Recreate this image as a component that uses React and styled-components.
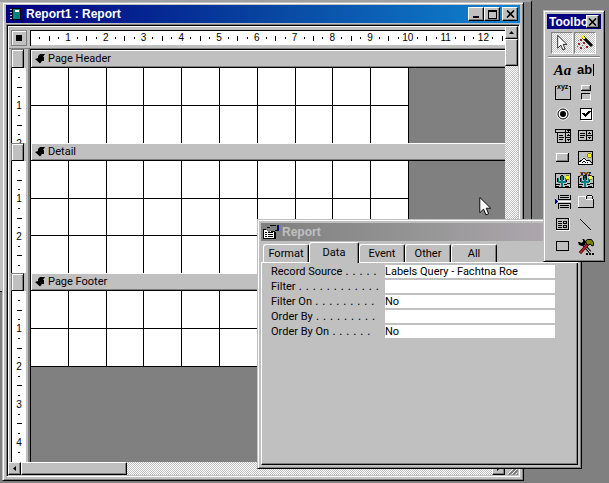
import React from "react";
import styled, { createGlobalStyle, css } from "styled-components";

const FACE = "#c0c0c0";
const SHADE = "#808080";
const UI = '"Liberation Sans", Arial, sans-serif';
const FORM = 'Roboto, Tahoma, sans-serif';

const GlobalStyle = createGlobalStyle`
  * { box-sizing: border-box; }
  html, body, #root { height: 100%; }
  body { margin: 0; background: ${SHADE}; overflow: hidden; }
  button, input { margin: 0; padding: 0; border: 0; border-radius: 0; color: #000; font: inherit; }
  svg { display: block; flex: none; }
`;

const raised = css`
  background: ${FACE};
  border: 1px solid;
  border-color: #fff #000 #000 #fff;
  box-shadow: inset -1px -1px ${SHADE};
`;
const dither = css`
  background: repeating-conic-gradient(#fff 0 25%, ${FACE} 0 50%) 0 0 / 2px 2px;
`;

const Desktop = styled.main`
  position: relative;
  width: 100%;
  height: 100%;
  min-height: 300px;
  overflow: hidden;
  background: ${SHADE};
  color: #000;
  font: 12px/14px ${UI};
`;

const BackWindow = styled.div`
  position: absolute;
  inset: 0 77px auto 0;
  height: 292px;
  background: linear-gradient(to right, ${FACE} 4px, ${SHADE} 4px);
  border-top: 2px solid #a0a0a0;
  border-right: 1px solid #000;
  border-bottom: 1px solid #000;
`;

const Frame = styled.section`
  position: absolute;
  display: flex;
  flex-direction: column;
  padding: 2px 3px 3px;
  background: ${FACE};
  border: 1px solid;
  border-color: ${FACE} #000 #000 ${FACE};
  box-shadow: inset 1px 1px #fff, inset -1px -1px ${SHADE};
`;
const ReportFrame = styled(Frame)`
  inset: 2px 85px 2px 2px;
`;
const PropertyFrame = styled(Frame)`
  inset: 219px 27px 14px 257px;
  padding-top: 3px;
`;
const ToolFrame = styled(Frame)`
  top: 10px;
  right: 4px;
  width: 62px;
  padding: 3px;
`;

const TitleBar = styled.header`
  display: flex;
  align-items: center;
  flex: none;
  height: 18px;
  padding: 0 2px 0 4px;
  gap: 5px;
  color: #fff;
  background: linear-gradient(to right, #000080, #0844a0 50%, #1084d0);
`;
const GrayTitleBar = styled(TitleBar)`
  padding-left: 2px;
  gap: 2px;
  color: ${FACE};
  background: linear-gradient(to right, #808080, #959595 50%, #b4acb4);
`;
const ToolTitleBar = styled(TitleBar)`
  height: 15px;
  padding: 0 2px;
  gap: 0;
  background: #000080;
`;
const Title = styled.h1`
  flex: 1;
  min-width: 0;
  margin: 0;
  overflow: hidden;
  white-space: nowrap;
  font: bold 12px/16px ${UI};
`;
const Caption = styled.div`
  display: flex;
`;
const CaptionButton = styled.button`
  ${raised}
  display: grid;
  place-items: center;
  width: ${(p) => (p.$small ? 13 : 16)}px;
  height: ${(p) => (p.$small ? 13 : 14)}px;
  margin-left: ${(p) => (p.$apart ? 2 : 0)}px;
`;

const Client = styled.div`
  flex: 1;
  min-height: 0;
  display: grid;
  grid-template: minmax(0, 1fr) 13px / minmax(0, 1fr) 13px;
  margin-top: 1px;
  border: 1px solid;
  border-color: ${SHADE} #fff #fff ${SHADE};
  box-shadow: inset 1px 1px #000;
  padding: 1px;
`;
const Design = styled.div`
  display: flex;
  flex-direction: column;
  min-height: 0;
  overflow: hidden;
  border-left: 1px solid #fff;
`;
const RulerRow = styled.div`
  display: grid;
  grid-template-columns: 21px minmax(0, 1fr);
  flex: none;
  height: 23px;
  padding-top: 3px;
  border-top: 1px solid #fff;
  box-shadow: inset 0 -1px ${SHADE};
`;
const SelectorCell = styled.button`
  display: grid;
  place-items: center;
  width: 16px;
  height: 16px;
  margin-left: 2px;
  background: ${FACE};
  border: 1px solid ${SHADE};
  box-shadow: inset 1px 1px #fff;
`;
const Ruler = styled.div`
  height: 16px;
  overflow: hidden;
  background: #fff;
  border: solid #000;
  border-width: 1px 0 0 1px;
  box-shadow: inset 0 -1px ${FACE};
`;
const Scale = styled.div`
  display: grid;
  grid-template-columns: repeat(50, 1fr);
  align-items: center;
  justify-items: center;
  width: 472px;
  height: 14px;
  margin-left: 4px;
`;
const Mark = styled.span`
  display: flex;
  justify-content: center;
  align-items: center;
  width: 2px;
  height: 10px;
  font: 10px/10px ${UI};
  &::before {
    content: "";
    flex: none;
    display: ${(p) => (p.$kind === "number" ? "none" : "block")};
    width: ${(p) => (p.$upright ? 1 : p.$kind === "tick" ? 5 : 2)}px;
    height: ${(p) => (p.$upright ? (p.$kind === "tick" ? 5 : 2) : 1)}px;
    background: #000;
  }
`;

const SectionBox = styled.div`
  display: flex;
  flex-direction: column;
  flex: ${(p) => (p.$fill ? "1 0 0" : "none")};
  min-height: 0;
`;
const BarRow = styled.div`
  display: grid;
  grid-template-columns: 21px minmax(0, 1fr);
  flex: none;
  height: ${(p) => (p.$first ? 19 : 18)}px;
`;
const BarGutter = styled.div`
  padding: 0 4px 0 2px;
  border-right: 2px solid ${SHADE};
`;
const SectionSelector = styled.button`
  ${raised}
  display: block;
  width: 100%;
  height: 100%;
  border-color: ${SHADE} #000 #000 ${SHADE};
  box-shadow: inset 1px 1px #fff, inset -1px 0 ${SHADE};
`;
const SectionBar = styled.div`
  display: flex;
  align-items: center;
  gap: 3px;
  padding-left: 4px;
  border: solid #000;
  border-width: ${(p) => (p.$first ? 1 : 0)}px 0 1px 1px;
  box-shadow: inset 1px 1px #fff, inset 0 -1px ${SHADE};
  font: 11px/16px ${FORM};
`;
const BodyRow = styled.div`
  display: grid;
  grid-template-columns: 21px minmax(0, 1fr);
  flex: ${(p) => (p.$height ? "none" : "1 0 0")};
  height: ${(p) => (p.$height ? p.$height + "px" : "auto")};
  min-height: 0;
  overflow: hidden;
`;
const Gutter = styled.div`
  padding: 0 2px;
  overflow: hidden;
  border-right: 2px solid ${SHADE};
`;
const VerticalRuler = styled.div`
  width: 15px;
  height: 100%;
  overflow: hidden;
  padding-top: 5px;
  background: #fff;
  border-left: 1px solid #000;
`;
const VerticalScale = styled.div`
  display: grid;
  grid-auto-rows: minmax(0, 1fr);
  place-items: center;
  height: ${(p) => p.$length}px;
`;
const Paper = styled.div`
  overflow: hidden;
  background: ${SHADE};
  border-left: 1px solid #000;
`;
const Sheet = styled.div`
  display: grid;
  grid-template-columns: repeat(10, 1fr);
  grid-auto-rows: 1fr;
  width: 378px;
  height: ${(p) => p.$length}px;
  background: #fff;
`;
const Cell = styled.i`
  border: solid #000;
  border-width: 0 1px 1px 0;
`;

const VScroll = styled.div`
  ${dither}
  display: flex;
  flex-direction: column;
`;
const HScroll = styled.div`
  ${dither}
  display: flex;
`;
const ScrollButton = styled.button`
  ${raised}
  display: grid;
  place-items: center;
  width: 13px;
  height: 13px;
`;
const Thumb = styled.div`
  ${raised}
  width: ${(p) => (p.$across ? 106 : 13)}px;
  height: ${(p) => (p.$across ? 13 : 27)}px;
  margin-right: auto;
`;
const Grip = styled.div`
  background: ${FACE};
`;

const PropertyBody = styled.div`
  flex: 1;
  display: flex;
  flex-direction: column;
  padding-top: 1px;
  font: 11px/14px ${FORM};
`;
const Tabs = styled.div`
  display: flex;
  align-items: flex-end;
  height: 21px;
  padding-left: 2px;
  background: linear-gradient(#fff, #fff) 0 100% / 100% 1px no-repeat;
`;
const Tab = styled.button`
  width: ${(p) => (p.$active ? 50 : 46)}px;
  height: ${(p) => (p.$active ? 21 : 18)}px;
  margin-bottom: ${(p) => (p.$active ? 0 : 1)}px;
  background: ${FACE};
  border: solid;
  border-width: 1px 1px 0 1px;
  border-color: #fff #000 #000 #fff;
  border-radius: 3px 2px 0 0;
  box-shadow: inset -1px 0 ${SHADE};
`;
const Panel = styled.div`
  flex: 1;
  display: flex;
  flex-direction: column;
  gap: 2px;
  padding: 2px 22px 0 9px;
  border: solid;
  border-width: 0 1px 1px 1px;
  border-color: #fff #000 #000 #fff;
  box-shadow: inset -1px -1px ${SHADE};
`;
const Field = styled.div`
  display: grid;
  grid-template-columns: 114px minmax(0, 1fr);
  height: 13px;
  line-height: 13px;
`;
const FieldLabel = styled.label`
  display: flex;
  gap: 3px;
  white-space: nowrap;
`;
const Leader = styled.span`
  font: 11px/13px "DejaVu Sans", sans-serif;
`;
const FieldInput = styled.input`
  min-width: 0;
  width: 100%;
  height: 13px;
  background: #fff;
  outline: 0;
`;

const Modes = styled.div`
  display: grid;
  grid-template-columns: 22px 22px;
  gap: 1px;
  padding: 3px 0 2px 4px;
`;
const ModeButton = styled.button`
  ${dither}
  display: grid;
  place-items: center;
  height: 22px;
  border: 1px solid;
  border-color: ${SHADE} #fff #fff ${SHADE};
`;
const Rule = styled.hr`
  width: 52px;
  margin: 0 0 1px 1px;
  border: solid;
  border-width: 1px 0;
  border-color: ${SHADE} transparent #fff;
`;
const Palette = styled.div`
  display: grid;
  grid-template-columns: 23px 23px;
  grid-auto-rows: 22px;
  padding: 0 0 1px 4px;
`;
const Tool = styled.button`
  display: grid;
  place-items: center;
  background: transparent;
  white-space: nowrap;
`;
const LabelGlyph = styled.span`
  font: italic bold 15px/16px "Liberation Serif", serif;
`;
const TextGlyph = styled.span`
  padding-right: 1px;
  border-right: 1px solid #000;
  font: bold 13px/12px ${UI};
`;

const Pointer = styled.div`
  position: absolute;
  left: 479px;
  top: 197px;
  pointer-events: none;
`;

const Arrow = ({ size = 19 }) => (
  <svg width={size === 19 ? 13 : 11} height={size} viewBox="0 0 13 20" aria-hidden="true">
    <path d="M.5.5V16.5L4.5 12.8 7 18.8 9.8 17.6 7.3 11.8H12z" fill="#fff" stroke="#000" />
  </svg>
);

const Pic = ({ children, box = 20 }) => (
  <svg width={box} height={box} viewBox={`0 0 ${box} ${box}`} fill="none" stroke="#000" shapeRendering="crispEdges" aria-hidden="true">
    {children}
  </svg>
);

const Cross = () => (
  <svg width="9" height="8" viewBox="0 0 9 8" aria-hidden="true">
    <path d="M1 .5l7 7M8 .5l-7 7" stroke="#000" strokeWidth="1.6" />
  </svg>
);

const Cactus = ({ top }) => (
  <>
    <path d={top ? "M4 6.500H2.500v11h15v-11H16" : "M2.500 3.500h15v14h-15z"} />
    <path stroke="none" fill="#008080" d="M8 6h2v11H8zM5 8h1v3h2v2H5zM12 8h1v5h-3v-2h2z" />
    <path d="M7.500 6v4M10.500 6v4M4.500 8v4M3 14.500h4M11 14.500h3M14 13.500h3M3 16.500h3M12 16.500h4M8 5.500h2M13.500 9v3" />
    <path stroke="none" fill="#ff0" d="M13 6h3v3h-3z" />
    <path stroke="#808000" d="M13 5.500h3M13 9.500h3" />
  </>
);

const tools = [
  ["Label", <LabelGlyph>Aa</LabelGlyph>],
  ["Text Box", <TextGlyph>ab</TextGlyph>],
  ["Option Group", <Pic>
    <path d="M4 4.500H2.500v13h15v-13H16" />
    <text x="4" y="7" stroke="none" fill="#000" fontFamily="Liberation Sans" fontWeight="bold" fontSize="7">xyz</text>
  </Pic>],
  ["Toggle Button", <Pic>
    <path d="M5.500 8V3.500H14" stroke="#fff" /><path d="M5 8.500h9.500V3" /><path d="M6 7.500h7.500V4" stroke={SHADE} />
    <path d="M5.500 17v-5.500H14" /><path d="M6 17.500h8.500V12" stroke="#fff" />
  </Pic>],
  ["Option Button", <svg width="20" height="20" viewBox="0 0 20 20" aria-hidden="true">
    <circle cx="10" cy="10" r="6" fill="none" stroke="#fff" /><circle cx="10" cy="10" r="5" fill="#fff" stroke="#000" /><circle cx="10" cy="10" r="3" />
  </svg>],
  ["Check Box", <Pic>
    <path d="M4.500 4.500h11v11h-11z" fill="#fff" /><path d="M16.500 5v11.500H5" stroke="#fff" />
    <path d="M7 9l2.500 3L14 7" strokeWidth="2" />
  </Pic>],
  ["Combo Box", <Pic>
    <path d="M2.500 3.500h15v3h-15zM4.500 7v9.500h13V7M12.500 4v12M6 9.500h4M6 11.500h5M6 13.500h4M13 11.500h4" />
    <path stroke="none" fill="#000" d="M14 4h3v1h-1v1h-1V5h-1zM15 8h1v1h-1zM14 9h3v1h-3zM14 13h3v1h-3zM15 14h1v1h-1z" />
  </Pic>],
  ["List Box", <Pic>
    <path d="M2.500 4.500h14v10h-14zM10.500 5v9M4 7.500h5M4 9.500h5M4 11.500h4M11 9.500h5" />
    <path stroke="none" fill="#000" d="M13 6h1v1h-1zM12 7h3v1h-3zM12 11h3v1h-3zM13 12h1v1h-1z" />
  </Pic>],
  ["Command Button", <Pic>
    <path d="M3.500 12V5.500H15" stroke="#fff" /><path d="M3 13.500h12.500V5" /><path d="M4 12.500h10.500V6" stroke={SHADE} />
  </Pic>],
  ["Image", <Pic>
    <path d="M2.500 3.500h14v13h-14z" />
    <path d="M3 16v-2l4-3h2l3 2 4 3z" fill="#fff" stroke="none" />
    <path d="M3 14l3-2 2-2 3 3 2-1 3 3M6 15l2-2 2 2M11 15l1-1" />
    <path stroke="none" fill="#ff0" d="M12 6h3v3h-3z" />
    <path stroke="#808000" d="M12 5.500h3M12 9.500h3M11.500 6v3M15.500 6v3" />
  </Pic>],
  ["Unbound Object Frame", <Pic><Cactus /></Pic>],
  ["Bound Object Frame", <Pic>
    <Cactus top />
    <text x="4" y="6" stroke="none" fill="#000" fontFamily="Liberation Sans" fontWeight="bold" fontSize="7">xyz</text>
  </Pic>],
  ["Page Break", <Pic>
    <path d="M5.500 3v4.500h12V3M5.500 17v-5.500h12V17M7 3.500h9M7 5.500h9M7 13.500h9M7 15.500h9" />
    <path d="M5 9.500h13" stroke="#fff" /><path d="M2 7l3 2.500L2 12z" fill="#000080" stroke="none" />
  </Pic>],
  ["Tab Control", <Pic>
    <path d="M2.500 16V4.500H9.500V7M10 7.500h7M12 4.500h4" stroke="#fff" /><path d="M10.500 4v3M11 3.500h5M16.500 4v3M2 15.500h15.500V7" />
  </Pic>],
  ["Subform", <Pic>
    <path d="M3.500 4.500h12v11h-12z" /><path d="M16.500 4v12.500H3" stroke="#fff" />
    <path d="M5 7.500h4M5 9.500h4M5 11.500h4M5 13.500h4M10.500 7.500h3v2h-3zM10.500 11.500h3v2h-3z" />
  </Pic>],
  ["Line", <Pic><path d="M4 5l11 11" /></Pic>],
  ["Rectangle", <Pic><path d="M3.500 5.500h12v9h-12z" /></Pic>],
  ["More Controls", <svg width="20" height="20" viewBox="0 0 20 20" aria-hidden="true">
    <path d="M6 7l8 9" stroke="#000" strokeWidth="3" /><path d="M6 7l8 9" stroke="#fff" />
    <path d="M2 6h2l1 1 2-1V4L6 3h2l2 3-1 3-3 1-3-1z" />
    <path d="M12 8l-8 9" stroke="#000" strokeWidth="3" /><path d="M12 8l-8 9" stroke="#c01818" strokeWidth="2" />
    <path d="M9.500 5l2-1.500h4l2 3v3l-1.500.5-1.500-2-2 1-2-1z" fill="#808000" stroke="#000" />
    <path d="M10 17h2v2h-2zM13 17h2v2h-2zM16 17h2v2h-2z" />
  </svg>],
];

const fields = [
  ["Record Source", ". . . . .", "Labels Query - Fachtna Roe"],
  ["Filter", ". . . . . . . . . . . .", ""],
  ["Filter On", ". . . . . . . . .", "No"],
  ["Order By", ". . . . . . . . .", ""],
  ["Order By On", ". . . . . .", "No"],
];

const sections = [
  { name: "Page Header", marks: 8, scale: 76, height: 75, sheet: 76, rows: 2 },
  { name: "Detail", marks: 11, scale: 104, height: 112, sheet: 113, rows: 3 },
  { name: "Page Footer", marks: 17, scale: 161, sheet: 76, rows: 2 },
];

const kinds = ["dot", "tick", "dot", "number"];
const Marks = ({ count, upright }) =>
  Array.from({ length: count }, (_, i) => {
    const kind = kinds[i % 4];
    return (
      <Mark key={i} $kind={kind} $upright={upright}>
        {kind === "number" ? (i + 1) / 4 : null}
      </Mark>
    );
  });

const Section = ({ name, marks, scale, height, sheet, rows, first }) => (
  <SectionBox $fill={!height}>
    <BarRow $first={first}>
      <BarGutter><SectionSelector aria-label={`Select ${name}`} /></BarGutter>
      <SectionBar $first={first}>
        <svg width="10" height="10" viewBox="0 0 10 10" aria-hidden="true">
          <path d="M5 0h5L8 3h1v4H7L5 9.500 0 5l3-1V2z" />
        </svg>
        {name}
      </SectionBar>
    </BarRow>
    <BodyRow $height={height}>
      <Gutter>
        <VerticalRuler>
          <VerticalScale $length={scale}><Marks count={marks} /></VerticalScale>
        </VerticalRuler>
      </Gutter>
      <Paper>
        <Sheet $length={sheet}>
          {Array.from({ length: rows * 10 }, (_, i) => <Cell key={i} />)}
        </Sheet>
      </Paper>
    </BodyRow>
  </SectionBox>
);

const ReportWindow = () => (
  <ReportFrame aria-label="Report1 : Report">
    <TitleBar>
      <svg width="11" height="12" viewBox="0 0 11 12" shapeRendering="crispEdges" aria-hidden="true">
        <path d="M1 0h10v12H1z" /><path d="M3 1h7v10H3z" fill="#008080" /><path d="M5 2h4v2H5z" fill="#fff" />
        <path d="M0 1h2v1H0zM0 4h2v1H0zM0 7h2v1H0zM0 10h2v1H0z" fill="#c0c0c0" />
      </svg>
      <Title>Report1 : Report</Title>
      <Caption>
        <CaptionButton aria-label="Minimize">
          <svg width="9" height="8" viewBox="0 0 9 8" aria-hidden="true"><path d="M1 6h6v2H1z" /></svg>
        </CaptionButton>
        <CaptionButton aria-label="Maximize">
          <svg width="9" height="9" viewBox="0 0 9 9" aria-hidden="true"><path d="M0 0h9v9H0zM1 2v6h7V2z" fillRule="evenodd" /></svg>
        </CaptionButton>
        <CaptionButton aria-label="Close" $apart><Cross /></CaptionButton>
      </Caption>
    </TitleBar>
    <Client>
      <Design>
        <RulerRow>
          <SelectorCell aria-label="Select report">
            <svg width="6" height="6" viewBox="0 0 6 6" aria-hidden="true"><path d="M0 0h6v6H0z" /></svg>
          </SelectorCell>
          <Ruler><Scale><Marks count={50} upright /></Scale></Ruler>
        </RulerRow>
        {sections.map((s, i) => <Section key={s.name} {...s} first={i === 0} />)}
      </Design>
      <VScroll>
        <ScrollButton aria-label="Scroll up">
          <svg width="5" height="3" viewBox="0 0 5 3" aria-hidden="true"><path d="M2.500 0L5 3H0z" /></svg>
        </ScrollButton>
        <Thumb />
      </VScroll>
      <HScroll>
        <ScrollButton aria-label="Scroll left">
          <svg width="3" height="5" viewBox="0 0 3 5" aria-hidden="true"><path d="M3 0v5L0 2.500z" /></svg>
        </ScrollButton>
        <Thumb $across />
        <ScrollButton aria-label="Scroll right">
          <svg width="3" height="5" viewBox="0 0 3 5" aria-hidden="true"><path d="M0 0v5l3-2.500z" /></svg>
        </ScrollButton>
      </HScroll>
      <Grip>
        <svg width="13" height="13" viewBox="0 0 13 13" aria-hidden="true">
          <path d="M4 13l9-9M8 13l5-5M12 13l1-1" stroke="#808080" strokeWidth="2" />
          <path d="M3 12l9-9M7 12l5-5M11 12l1-1" stroke="#fff" />
        </svg>
      </Grip>
    </Client>
  </ReportFrame>
);

const PropertyWindow = () => (
  <PropertyFrame aria-label="Report properties">
    <GrayTitleBar>
      <svg width="17" height="15" viewBox="0 0 17 15" shapeRendering="crispEdges" aria-hidden="true">
        <path d="M.5 4.500h11v9H.5z" fill="#fff" stroke="#000" />
        <path d="M2 7.500h2M5 7.500h5M2 9.500h2M5 9.500h5M2 11.500h2M5 11.500h5" stroke="#000" />
        <path d="M3 4l4-3h7v4l-3 1H8L5 7z" fill={SHADE} />
        <path d="M4 2.500h3M7 .5h6M8 6.500h3M12 5.500h2M12.500 7v7" stroke="#000" />
        <path d="M14 0h2v6h-2z" fill="#000080" />
      </svg>
      <Title>Report</Title>
    </GrayTitleBar>
    <PropertyBody>
      <Tabs role="tablist">
        {["Format", "Data", "Event", "Other", "All"].map((t) => (
          <Tab key={t} role="tab" aria-selected={t === "Data"} $active={t === "Data"}>{t}</Tab>
        ))}
      </Tabs>
      <Panel role="tabpanel">
        {fields.map(([label, leader, value], i) => (
          <Field key={label}>
            <FieldLabel htmlFor={`field-${i}`}>{label}<Leader>{leader}</Leader></FieldLabel>
            <FieldInput id={`field-${i}`} defaultValue={value} />
          </Field>
        ))}
      </Panel>
    </PropertyBody>
  </PropertyFrame>
);

const Toolbox = () => (
  <ToolFrame aria-label="Toolbox">
    <ToolTitleBar>
      <Title>Toolbox</Title>
      <CaptionButton aria-label="Close toolbox" $small><Cross /></CaptionButton>
    </ToolTitleBar>
    <Modes>
      <ModeButton aria-label="Select Objects"><Arrow size={16} /></ModeButton>
      <ModeButton aria-label="Control Wizards">
        <Pic box={18}>
          <path d="M7 3l9 9" strokeWidth="3" shapeRendering="auto" />
          <path d="M6 2l3 3" stroke="#ff0" strokeWidth="2" />
          <path d="M4 5h2v2H4zM7 8h2v2H7zM2 9h2v2H2zM4 13h2v2H4zM10 12h2v2h-2z" fill="#a02020" stroke="none" />
          <path d="M2 6h1M6 11h1M1 12h1M8 14h1" stroke={SHADE} />
        </Pic>
      </ModeButton>
    </Modes>
    <Rule />
    <Palette>
      {tools.map(([name, icon]) => <Tool key={name} aria-label={name}>{icon}</Tool>)}
    </Palette>
  </ToolFrame>
);

export default function App() {
  return (
    <>
      <GlobalStyle />
      <Desktop>
        <BackWindow />
        <ReportWindow />
        <PropertyWindow />
        <Toolbox />
        <Pointer><Arrow /></Pointer>
      </Desktop>
    </>
  );
}
